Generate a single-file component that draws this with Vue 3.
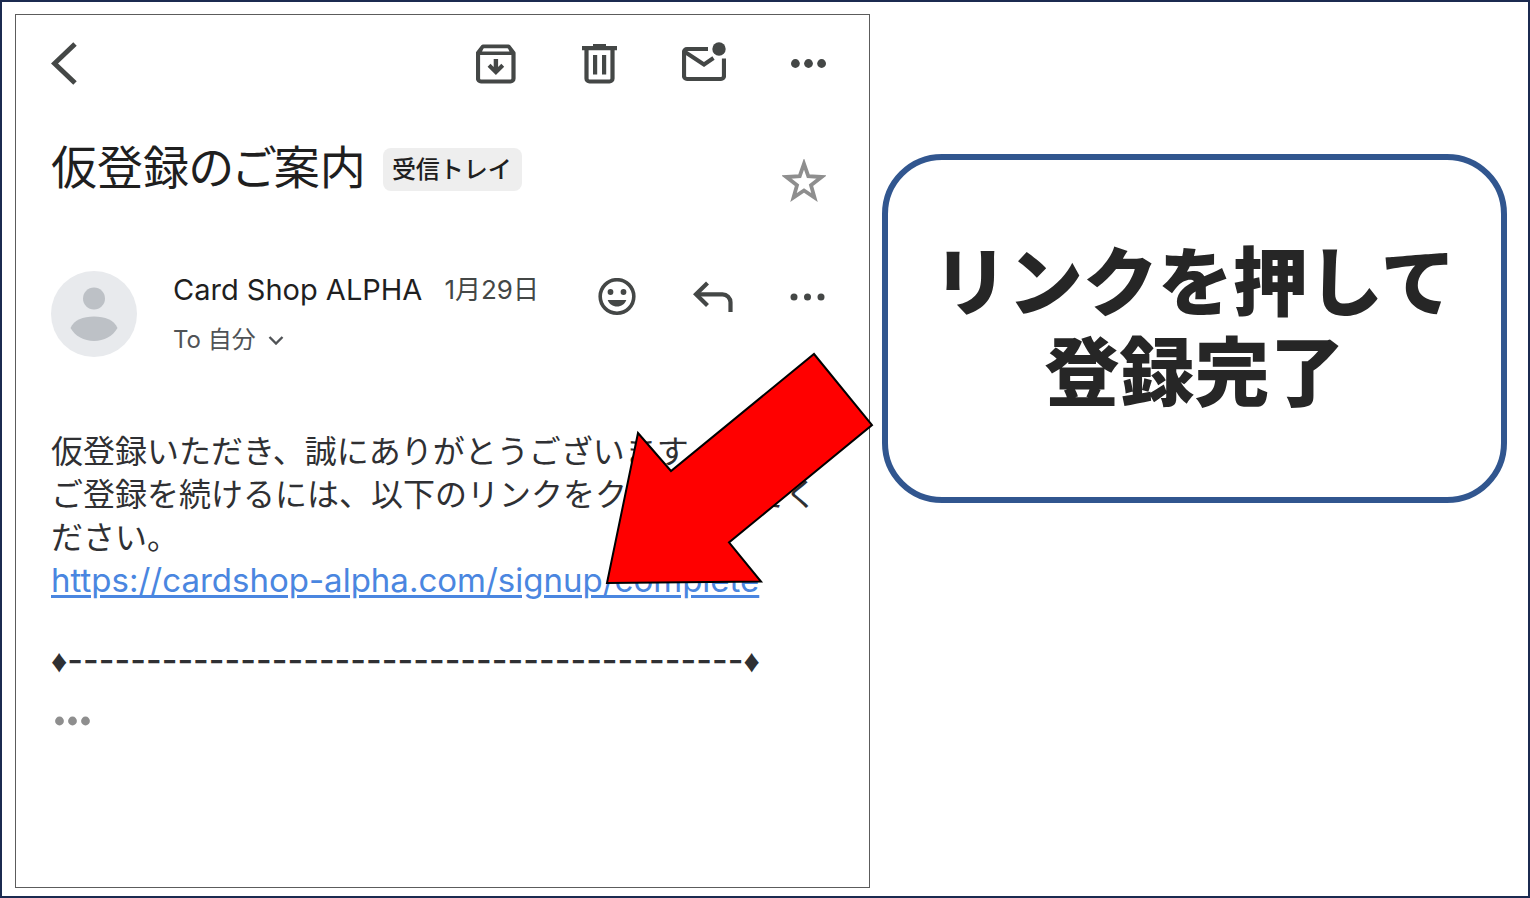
<template>
  <main class="frame">
    <article class="mail">
      <header class="toolbar">
        <button type="button" class="icon-btn back" aria-label="戻る">
          <svg width="26" height="44" viewBox="0 0 26 44">
            <path d="M24 2 3.500 21.500 24 41" fill="none" stroke="currentColor" stroke-width="5" />
          </svg>
        </button>
        <button type="button" class="icon-btn" aria-label="アーカイブ">
          <svg width="41" height="40" viewBox="0 0 41 40">
            <path
              d="M2 9v25.500a3 3 0 0 0 3 3h29.500a3 3 0 0 0 3-3V9l-5-6.500H7z"
              fill="none"
              stroke="currentColor"
              stroke-width="4.200"
              stroke-linejoin="round"
            />
            <path d="M5 5h30l3 6H2z" fill="currentColor" />
            <path d="M7.500 4.600h24.500l1.500 2.800H6z" fill="#fff" />
            <path d="M17.700 15h4.400v8l3.200-3.200 2.900 2.900-8.300 8.300-8.300-8.300 2.900-2.900 3.200 3.200z" fill="currentColor" />
          </svg>
        </button>
        <button type="button" class="icon-btn" aria-label="削除">
          <svg width="35" height="40" viewBox="0 0 35 40">
            <path d="M11 0h13v2h11v4.200H0V2h11z" fill="currentColor" />
            <path d="M4.500 5v29.500a3 3 0 0 0 3 3h20a3 3 0 0 0 3-3V5" fill="none" stroke="currentColor" stroke-width="4.200" />
            <path d="M11 11h4.200v19.500H11zM20 11h4.200v19.500H20z" fill="currentColor" />
          </svg>
        </button>
        <button type="button" class="icon-btn" aria-label="未読にする">
          <svg width="44" height="44" viewBox="0 1 44 44">
            <path
              d="M26 8H5a3 3 0 0 0-3 3v24a3 3 0 0 0 3 3h34a3 3 0 0 0 3-3V17.500"
              fill="none"
              stroke="currentColor"
              stroke-width="4.200"
            />
            <path d="M3 11 22 23.500l9.500-6.500" fill="none" stroke="currentColor" stroke-width="4" />
            <circle cx="37" cy="8" r="6.700" fill="currentColor" />
          </svg>
        </button>
        <button type="button" class="icon-btn" aria-label="その他">
          <svg width="35" height="10" viewBox="0 0 35 10">
            <circle v-for="x in [4.400, 17.500, 30.600]" :key="x" :cx="x" cy="4.500" r="4.400" fill="currentColor" />
          </svg>
        </button>
      </header>

      <div class="subject">
        <h1>仮登録のご案内</h1>
        <span class="label">受信トレイ</span>
        <button type="button" class="icon-btn star" aria-label="スターを付ける">
          <svg width="44" height="43" viewBox="0 0 44 43">
            <path
              d="M22 4.800 26.300 17.200 39.500 18 29 26.200 32.500 38.500 22 31.500 11.500 38.500 15 26.200 4.500 18 17.700 17.200z"
              fill="none"
              stroke="currentColor"
              stroke-width="3.800"
              stroke-miterlimit="8"
            />
          </svg>
        </button>
      </div>

      <div class="sender">
        <svg class="avatar" width="86" height="86" viewBox="0 0 86 86" aria-hidden="true">
          <circle cx="43" cy="43" r="43" fill="#e8eaed" />
          <circle cx="43" cy="27.500" r="11" fill="#bdc1c6" />
          <path d="M19.500 57C23 49 32 45.500 43 45.500S63 49 66.500 57C62 65 53 70 43 70s-19-5-23.500-13z" fill="#bdc1c6" />
        </svg>
        <div class="who">
          <div class="name-row">
            <span class="name">Card Shop ALPHA</span>
            <time class="date">1月29日</time>
          </div>
          <button type="button" class="recipient">
            To 自分
            <svg width="16" height="10" viewBox="0 0 16 10">
              <path d="M1.500 2 8 8.500 14.500 2" fill="none" stroke="currentColor" stroke-width="2.400" />
            </svg>
          </button>
        </div>
        <div class="actions">
          <button type="button" class="icon-btn" aria-label="リアクション">
            <svg width="38" height="38" viewBox="0 0 38 38">
              <circle cx="19" cy="18.500" r="16.800" fill="none" stroke="currentColor" stroke-width="3.600" />
              <circle cx="12.500" cy="14" r="2.900" fill="currentColor" />
              <circle cx="25.500" cy="14" r="2.900" fill="currentColor" />
              <path d="M9.700 22h18.600c-1.500 4.300-5 6.500-9.300 6.500s-7.800-2.200-9.300-6.500z" fill="currentColor" />
            </svg>
          </button>
          <button type="button" class="icon-btn" aria-label="返信">
            <svg width="40" height="32" viewBox="0 0 40 32">
              <path d="M14.500 2 3 13.300l11.500 11.300" fill="none" stroke="currentColor" stroke-width="4.200" />
              <path d="M4 13.300h25.500a8 8 0 0 1 8 8V31" fill="none" stroke="currentColor" stroke-width="4.200" />
            </svg>
          </button>
          <button type="button" class="icon-btn" aria-label="メッセージのその他の操作">
            <svg width="36" height="8" viewBox="0 0 36 8">
              <circle v-for="x in [4, 17.500, 31]" :key="x" :cx="x" cy="4" r="3.500" fill="currentColor" />
            </svg>
          </button>
        </div>
      </div>

      <div class="body">
        <p>仮登録いただき、誠にありがとうございます。</p>
        <p>ご登録を続けるには、以下のリンクをクリックしてください。</p>
        <p><a href="https://cardshop-alpha.com/signup/complete">https://cardshop-alpha.com/signup/complete</a></p>
        <p class="rule"><span class="diamond">♦</span>{{ dashes }}<span class="diamond">♦</span></p>
      </div>

      <button type="button" class="icon-btn trimmed" aria-label="省略された内容を表示">
        <svg width="36" height="10" viewBox="0 0 36 10">
          <circle v-for="x in [4.500, 17.500, 30.500]" :key="x" :cx="x" cy="5" r="4.400" fill="currentColor" />
        </svg>
      </button>

      <svg class="arrow" width="270" height="236" viewBox="0 0 270 236" aria-hidden="true">
        <path
          d="M210 3 268 74 125 191.500 157 230.500 3 232 34 82 67 120z"
          fill="#f00"
          stroke="#000"
          stroke-width="2"
        />
      </svg>
    </article>

    <aside class="callout">
      <p>リンクを押して<br />登録完了</p>
    </aside>
  </main>
</template>

<script setup>
const dashes = '-'.repeat(43)
</script>

<style>
body {
  margin: 0;
}
</style>

<style scoped>
.frame {
  box-sizing: border-box;
  min-height: 100vh;
  padding: 12px 21px 8px 13px;
  border: 2px solid #1b2a50;
  display: grid;
  grid-template-columns: 855fr 625fr;
  column-gap: 12px;
  background: #fff;
  font-family: Inter, "Noto Sans CJK JP", sans-serif;
}

.mail {
  position: relative;
  box-sizing: border-box;
  min-width: 0;
  padding: 27px 43px 40px 35px;
  border: 1px solid #5c5c5c;
  color: #444746;
}

.icon-btn {
  display: flex;
  padding: 0;
  border: 0;
  background: none;
  color: inherit;
  cursor: pointer;
}

.toolbar {
  display: flex;
  align-items: center;
  gap: 65px;
}

.back {
  margin-right: auto;
}

.subject {
  display: flex;
  align-items: flex-start;
  margin-top: 53px;
}

h1 {
  margin: 0;
  font-size: 46px;
  font-weight: 400;
  line-height: 56px;
  font-feature-settings: "palt";
  color: #1f1f1f;
}

.label {
  margin: 9px 0 0 17px;
  padding: 0 10px 0 9px;
  border-radius: 8px;
  background: #eee;
  font-size: 24px;
  font-weight: 500;
  line-height: 43px;
  color: #1f1f1f;
}

.star {
  margin: 20px 0 0 auto;
  color: #8e8e8e;
}

.sender {
  display: flex;
  margin-top: 69px;
}

.who {
  margin-left: 36px;
  padding-top: 1px;
}

.name-row {
  display: flex;
  align-items: center;
  gap: 22px;
  line-height: 36px;
}

.name {
  font-size: 29px;
  color: #1f1f1f;
}

.date {
  font-size: 26px;
}

.recipient {
  display: flex;
  align-items: center;
  gap: 12px;
  margin-top: 14px;
  padding: 0;
  border: 0;
  background: none;
  font-family: inherit;
  font-size: 24px;
  line-height: 36px;
  color: #505356;
  cursor: pointer;
}

.actions {
  display: flex;
  align-items: center;
  gap: 57px;
  height: 52px;
  margin-left: auto;
}

.body {
  margin-top: 72px;
  font-size: 32px;
  line-height: 43px;
  color: #2f3033;
}

.body p {
  margin: 0;
}

.body a {
  font-size: 33px;
  color: #4a86e0;
  text-underline-offset: 3px;
}

.body .rule {
  margin-top: 36px;
  font-size: 34px;
  font-weight: 500;
  white-space: nowrap;
}

.diamond {
  font-family: "Liberation Sans", sans-serif;
  font-size: 32px;
  font-weight: 400;
}

.trimmed {
  margin: 33px 0 0 4px;
  color: #8e8e8e;
}

.arrow {
  position: absolute;
  top: 336px;
  right: -5px;
}

.callout {
  display: flex;
  align-items: center;
  justify-content: center;
  align-self: start;
  box-sizing: border-box;
  min-height: 349px;
  margin-top: 140px;
  padding-bottom: 12px;
  border: 6px solid #31568f;
  border-radius: 60px;
}

.callout p {
  margin: 0;
  font-family: "Noto Sans CJK JP", sans-serif;
  font-size: 75px;
  font-weight: 900;
  line-height: 90px;
  text-align: center;
  color: #262626;
}
</style>
